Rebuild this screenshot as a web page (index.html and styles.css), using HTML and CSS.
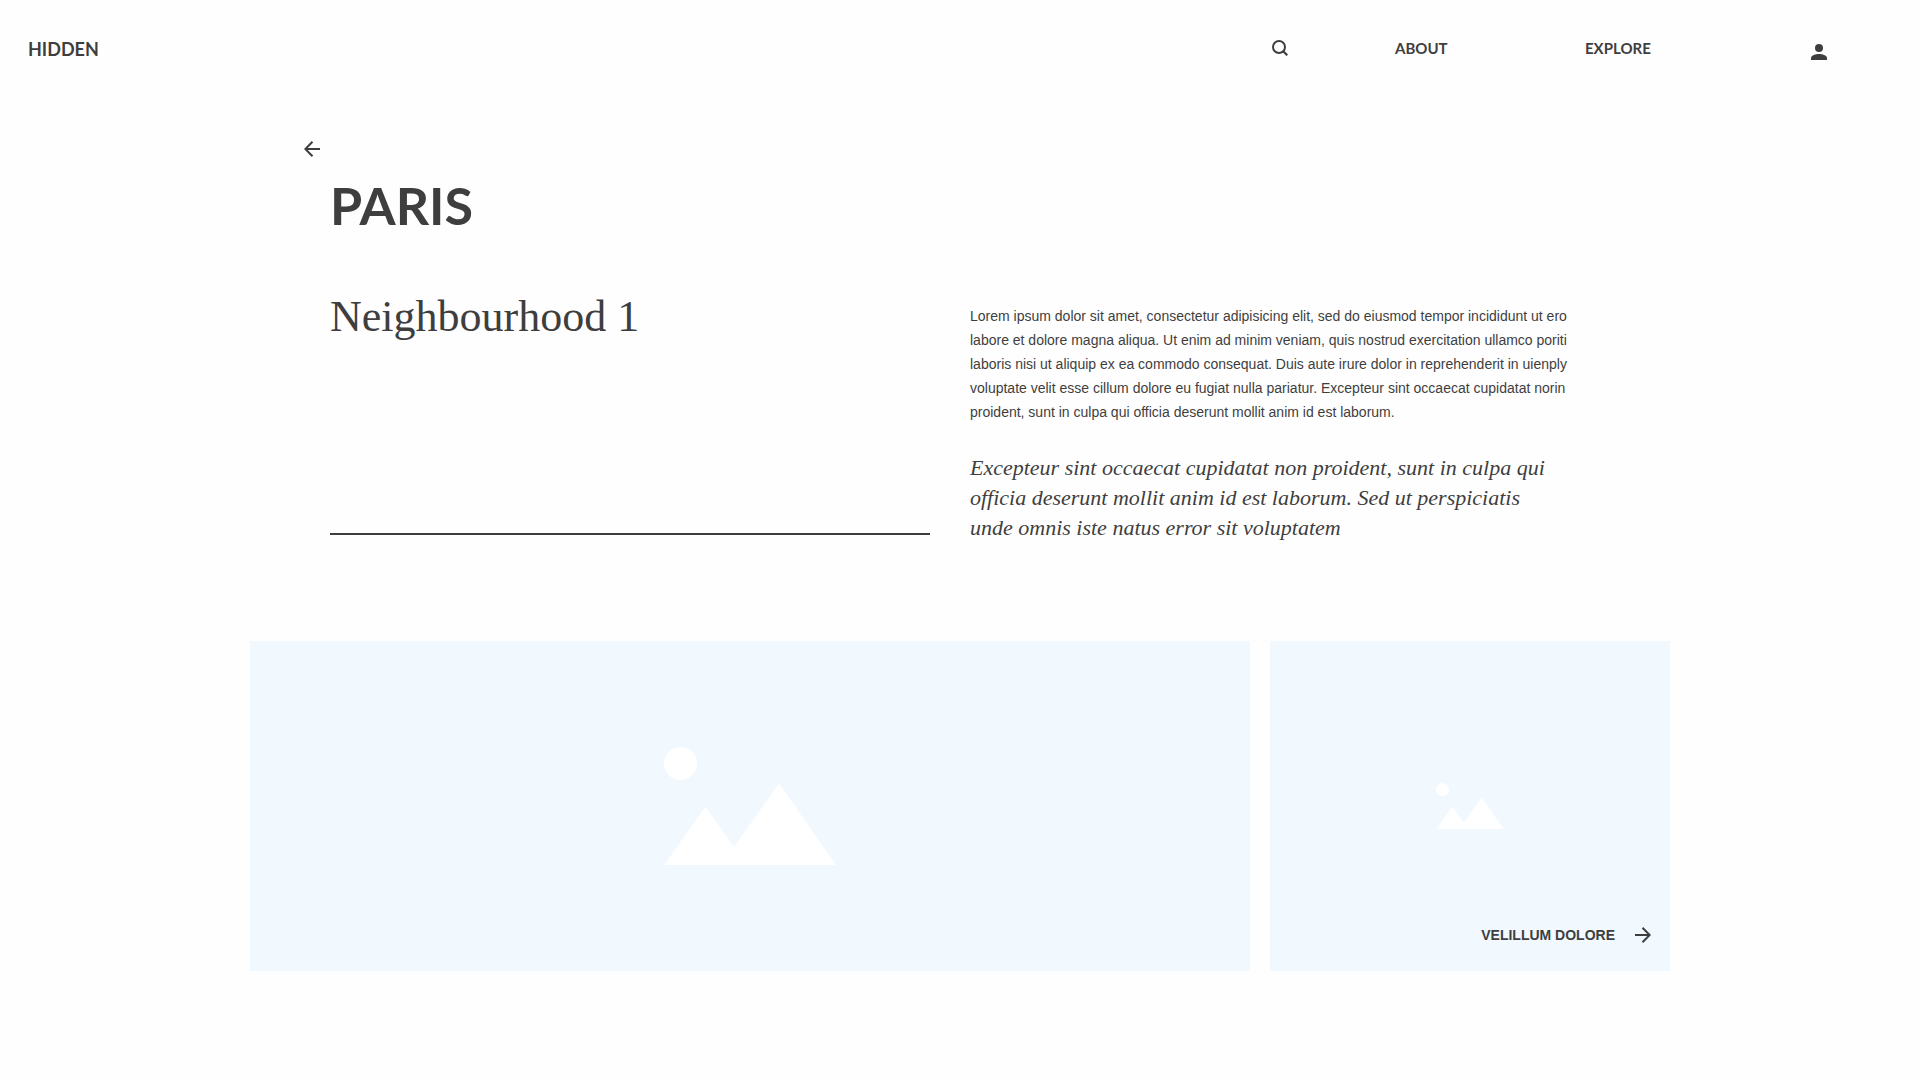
FILE: index.html
```html
<!DOCTYPE html>
<html lang="en">
<head>
<meta charset="utf-8">
<meta name="viewport" content="width=device-width, initial-scale=1">
<title>Hidden – Paris</title>
<link rel="stylesheet" href="styles.css">
</head>
<body>
<header class="site-header">
  <a class="brand" href="#">HIDDEN</a>
  <nav class="site-nav">
    <button class="icon-button" type="button" aria-label="Search">
      <svg class="icon" viewBox="0 0 16 16"><circle cx="7" cy="7" r="6" fill="none" stroke="currentColor" stroke-width="2"/><path d="M11 11l4.300 4.300" stroke="currentColor" stroke-width="2.200"/></svg>
    </button>
    <a class="nav-link" href="#">ABOUT</a>
    <a class="nav-link" href="#">EXPLORE</a>
    <a class="account" href="#" aria-label="Account">
      <svg class="icon" viewBox="0 0 16 16"><circle cx="8" cy="4" r="4" fill="currentColor"/><path d="M0 16v-2c0-2.600 5-4 8-4s8 1.400 8 4v2z" fill="currentColor"/></svg>
    </a>
  </nav>
</header>
<main class="page">
  <section class="intro">
    <a class="back" href="#" aria-label="Back">
      <svg class="icon" viewBox="0 0 16 16" fill="none" stroke="currentColor" stroke-width="2"><path d="M16 8H1.500M8.500 .8L1.300 8l7.200 7.200"/></svg>
    </a>
    <h1 class="city">PARIS</h1>
    <div class="columns">
      <h2 class="area">Neighbourhood 1</h2>
      <div class="copy">
        <p class="body-text">Lorem ipsum dolor sit amet, consectetur adipisicing elit, sed do eiusmod tempor incididunt ut ero<br>labore et dolore magna aliqua. Ut enim ad minim veniam, quis nostrud exercitation ullamco poriti<br>laboris nisi ut aliquip ex ea commodo consequat. Duis aute irure dolor in reprehenderit in uienply<br>voluptate velit esse cillum dolore eu fugiat nulla pariatur. Excepteur sint occaecat cupidatat norin<br>proident, sunt in culpa qui officia deserunt mollit anim id est laborum.</p>
        <p class="quote">Excepteur sint occaecat cupidatat non proident, sunt in culpa qui<br>officia deserunt mollit anim id est laborum. Sed ut perspiciatis<br>unde omnis iste natus error sit voluptatem</p>
      </div>
    </div>
  </section>
  <section class="gallery">
    <div class="tile">
      <svg class="picture picture-large" viewBox="0 0 172 118" fill="#fff"><circle cx="16.500" cy="16.500" r="16.500"/><path d="M0 118L41.500 59.500 70 100 115 36.500 172 118z"/></svg>
    </div>
    <div class="tile">
      <svg class="picture picture-small" viewBox="0 0 172 118" fill="#fff"><circle cx="16.500" cy="16.500" r="16.500"/><path d="M0 118L41.500 59.500 70 100 115 36.500 172 118z"/></svg>
      <a class="tile-link" href="#">VELILLUM DOLORE
        <svg class="icon" viewBox="0 0 16 16" fill="none" stroke="currentColor" stroke-width="2"><path d="M0 8h14.500M7.500 .8L14.700 8l-7.200 7.200"/></svg>
      </a>
    </div>
  </section>
</main>
</body>
</html>
```

FILE: styles.css
```css
* { box-sizing: border-box; }
body {
  margin: 0;
  background: #fefefe;
  color: #3e3e3e;
  font-family: "Liberation Sans", Arial, sans-serif;
}
a { color: inherit; text-decoration: none; }
h1, h2, p { margin: 0; font-weight: normal; }
.icon { display: block; width: 16px; height: 16px; }

.site-header {
  display: flex;
  justify-content: space-between;
  align-items: center;
  height: 96px;
  padding: 0 93px 0 28px;
  font-family: Lato, sans-serif;
  font-weight: bold;
}
.brand { padding-top: 2px; font-size: 18px; line-height: 24px; }
.site-nav {
  display: grid;
  grid-template-columns: 123px 190px 226px 16px;
  align-items: center;
}
.icon-button { justify-self: start; padding: 0; border: 0; background: none; color: inherit; }
.nav-link { font-size: 15px; line-height: 24px; }
.account { padding-top: 8px; }

.page { max-width: 1420px; margin: 0 auto; padding-bottom: 108px; }
.intro { padding: 45px 80px 98px; }
.back { display: block; width: 16px; margin-left: -26px; }
.city {
  margin-top: 16px;
  font: bold 52px/64px Lato, sans-serif;
}
.columns {
  display: grid;
  grid-template-columns: 600fr 620fr;
  column-gap: 40px;
  margin-top: 56px;
}
.area {
  margin-bottom: 8px;
  border-bottom: 2px solid #3e3e3e;
  font: 44px/48px Georgia, "Liberation Serif", serif;
}
.copy { padding-top: 11px; }
.body-text { font-size: 14px; line-height: 24px; }
.quote {
  margin-top: 29px;
  font: italic 22px/30px Georgia, "Liberation Serif", serif;
}

.gallery {
  display: grid;
  grid-template-columns: 1000fr 400fr;
  gap: 20px;
}
.tile {
  display: grid;
  position: relative;
  place-items: center;
  min-height: 330px;
  background: #f1f8fe;
}
.picture-large { width: 172px; }
.picture-small { width: 68px; }
.tile-link {
  position: absolute;
  right: 19px;
  bottom: 24px;
  display: flex;
  align-items: center;
  gap: 20px;
  font-size: 14px;
  line-height: 24px;
  font-weight: bold;
}
```
